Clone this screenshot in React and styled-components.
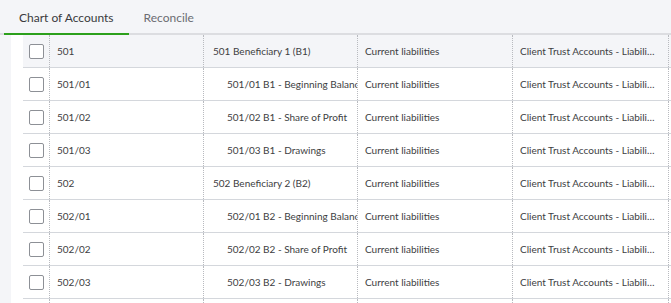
import React from 'react'
import styled, { createGlobalStyle } from 'styled-components'

const GlobalStyle = createGlobalStyle`
  html, body {
    margin: 0;
    padding: 0;
    background: #f4f5f8;
    overflow: hidden;
  }
  body {
    font-family: Lato, 'Open Sans', sans-serif;
    color: #393a3d;
  }
`

const Page = styled.div`
  width: 671px;
  height: 303px;
  overflow: hidden;
`

const TabBar = styled.div`
  display: flex;
  height: 33px;
  padding-left: 4px;
  border-bottom: 2px solid #dcdde1;
`

const Tab = styled.div`
  display: flex;
  align-items: center;
  padding: 2px 15px 0;
  margin-bottom: -2px;
  font-size: 12px;
  color: ${p => (p.active ? '#393a3d' : '#6b6c72')};
  border-bottom: 2px solid ${p => (p.active ? '#2ca01c' : 'transparent')};
`

const Body = styled.div`
  padding-left: 11px;
`

const Table = styled.div`
  background: #fff;
  padding-left: 12px;
`

const Row = styled.div`
  display: grid;
  grid-template-columns: 27px 154px 154px 155px 156px 1fr;
  height: 32px;
  border-bottom: 1px solid #d4d7dc;
  background: ${p => (p.highlight ? '#f4f5f8' : '#fff')};
`

const Cell = styled.div`
  display: flex;
  align-items: center;
  padding-left: ${p => p.pad || 7}px;
  font-size: 10px;
  color: #3d3e42;
  white-space: nowrap;
  overflow: hidden;
  border-right: 1px dotted #b8babf;
  min-width: 0;
`

const CheckCell = styled.div`
  display: flex;
  align-items: center;
  padding-left: 6px;
  border-right: 1px dotted #b8babf;
`

const Check = styled.div`
  width: 13px;
  height: 13px;
  border: 1px solid #8d9096;
  border-radius: 2px;
  background: #fff;
`

const Ellipsis = styled.span`
  display: block;
  max-width: 139px;
  overflow: hidden;
  text-overflow: ellipsis;
`

const rows = [
  { num: '501', name: '501 Beneficiary 1 (B1)', parent: true, highlight: true },
  { num: '501/01', name: '501/01 B1 - Beginning Balance' },
  { num: '501/02', name: '501/02 B1 - Share of Profit' },
  { num: '501/03', name: '501/03 B1 - Drawings' },
  { num: '502', name: '502 Beneficiary 2 (B2)', parent: true },
  { num: '502/01', name: '502/01 B2 - Beginning Balance' },
  { num: '502/02', name: '502/02 B2 - Share of Profit' },
  { num: '502/03', name: '502/03 B2 - Drawings' }
]

export default () => (
  <Page>
    <GlobalStyle />
    <TabBar>
      <Tab active>Chart of Accounts</Tab>
      <Tab>Reconcile</Tab>
    </TabBar>
    <Body>
      <Table>
        {rows.map(r => (
          <Row key={r.num} highlight={r.highlight}>
            <CheckCell><Check /></CheckCell>
            <Cell>{r.num}</Cell>
            <Cell pad={r.parent ? 9 : 23}>{r.name}</Cell>
            <Cell>Current liabilities</Cell>
            <Cell><Ellipsis>Client Trust Accounts - Liabilities</Ellipsis></Cell>
            <Cell />
          </Row>
        ))}
        <Row>
          <CheckCell />
          <Cell />
          <Cell />
          <Cell />
          <Cell />
          <Cell />
        </Row>
      </Table>
    </Body>
  </Page>
)
